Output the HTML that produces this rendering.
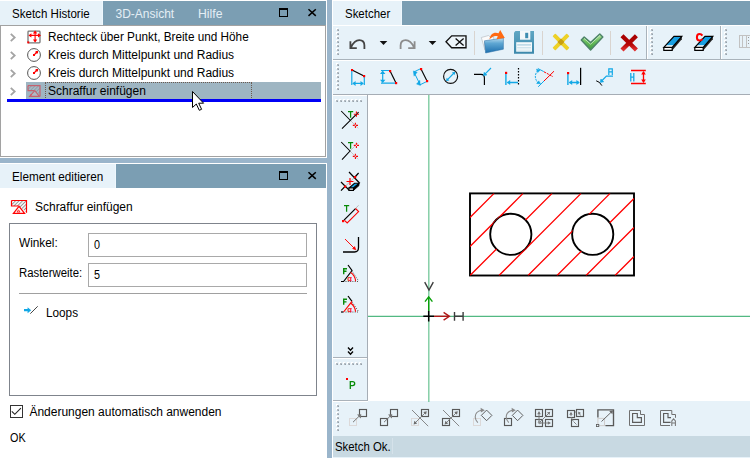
<!DOCTYPE html>
<html><head><meta charset="utf-8"><title>Sketcher</title>
<style>
html,body{margin:0;padding:0}
body{width:750px;height:458px;overflow:hidden;position:relative;background:#e7f2f9;font-family:"Liberation Sans",sans-serif;font-size:12px;color:#000}
.b{position:absolute}
.t{position:absolute;white-space:pre;line-height:14px;height:14px;transform-origin:0 0}
.steel{background:#7b9eb3}
.light{background:#e7f2f9}
.spl{background:#9ab5cb}
svg{position:absolute;left:0;top:0}
</style></head><body>
<!-- top line -->
<div class="b" style="left:0;top:0;width:750px;height:1px;background:#fff"></div>
<!-- LEFT: tab bar 1 -->
<div class="b steel" style="left:0;top:1px;width:326px;height:24px"></div>
<div class="b light" style="left:0;top:1px;width:102px;height:24px;border-right:1px solid #eef7fd"></div>
<div class="t" id="t1" style="left:12px;top:7px;transform:scaleX(0.963);">Sketch Historie</div>
<div class="t" id="t2" style="left:115.5px;top:7px;transform:scaleX(1.0);color:#e4eef5">3D-Ansicht</div>
<div class="t" id="t3" style="left:198.3px;top:7px;transform:scaleX(1.02);color:#e4eef5">Hilfe</div>
<!-- tree -->
<div class="b" style="left:0;top:25px;width:324px;height:130px;background:#fff;border:1px solid #a2a2a2"></div>
<div class="b" style="left:26px;top:82px;width:295px;height:17px;background:#9eb5c2"></div>
<div class="b" style="left:45px;top:82px;width:205px;height:15px;border:1px dotted #6b5a50;border-bottom:none"></div>
<div class="b" style="left:7px;top:99px;width:314px;height:3px;background:#0000f6"></div>
<div class="t" id="t4" style="left:48px;top:30px;transform:scaleX(0.98);">Rechteck über Punkt, Breite und Höhe</div>
<div class="t" id="t5" style="left:48px;top:48px;transform:scaleX(1);">Kreis durch Mittelpunkt und Radius</div>
<div class="t" id="t6" style="left:48px;top:66px;transform:scaleX(1);">Kreis durch Mittelpunkt und Radius</div>
<div class="t" id="t7" style="left:48px;top:84px;transform:scaleX(1);">Schraffur einfügen</div>
<!-- h splitter -->
<div class="b" style="left:0;top:157px;width:327px;height:7px;background:#fff"></div>
<!-- tab bar 2 -->
<div class="b steel" style="left:0;top:164px;width:326px;height:24px"></div>
<div class="b light" style="left:0;top:164px;width:115px;height:24px;border-right:1px solid #eef7fd"></div>
<div class="t" id="t8" style="left:12px;top:170px;transform:scaleX(0.978);">Element editieren</div>
<!-- edit panel -->
<div class="b" style="left:0;top:188px;width:326px;height:270px;background:#fff"></div>
<div class="t" id="t9" style="left:35px;top:200px;transform:scaleX(0.998);">Schraffur einfügen</div>
<div class="b" style="left:9px;top:223px;width:306px;height:171px;border:1px solid #7f848c"></div>
<div class="t" id="t10" style="left:19px;top:236px;transform:scaleX(0.985);">Winkel:</div>
<div class="b" style="left:88px;top:233px;width:217px;height:22px;border:1px solid #a9a9a9;background:#fff"></div>
<div class="t" id="t11" style="left:94px;top:238px;transform:scaleX(0.9);">0</div>
<div class="t" id="t12" style="left:19px;top:266px;transform:scaleX(0.947);">Rasterweite:</div>
<div class="b" style="left:88px;top:263px;width:217px;height:22px;border:1px solid #a9a9a9;background:#fff"></div>
<div class="t" id="t13" style="left:94px;top:268px;transform:scaleX(0.9);">5</div>
<div class="b" style="left:19px;top:293px;width:288px;height:1px;background:#a0a0a0"></div>
<div class="t" id="t14" style="left:46px;top:306px;transform:scaleX(0.98);">Loops</div>
<div class="b" style="left:10px;top:405px;width:11px;height:11px;border:1px solid #333;background:#fff"></div>
<div class="t" id="t15" style="left:29.4px;top:405px;transform:scaleX(1.0);">Änderungen automatisch anwenden</div>
<div class="t" id="t16" style="left:9.5px;top:431px;transform:scaleX(0.9);">OK</div>
<!-- v splitter -->
<div class="b" style="left:326px;top:0;width:7px;height:458px;background:#fff"></div>
<div class="b spl" style="left:327px;top:0;width:5px;height:458px"></div>
<div class="b spl" style="left:0;top:158px;width:331px;height:5px"></div>
<!-- RIGHT -->
<div class="b steel" style="left:402px;top:1px;width:348px;height:24px"></div>
<div class="b" style="left:401px;top:1px;width:1px;height:24px;background:#eef7fd"></div>
<div class="t" id="t17" style="left:345px;top:7px;transform:scaleX(0.955);">Sketcher</div>
<div class="b" style="left:333px;top:25px;width:417px;height:1px;background:#fff"></div>
<div class="b" style="left:333px;top:59px;width:417px;height:1px;background:#a9b3bb"></div>
<div class="b" style="left:333px;top:60px;width:417px;height:1px;background:#fff"></div>
<div class="b" style="left:333px;top:94px;width:417px;height:1px;background:#a6adb5"></div>
<div class="b" style="left:333px;top:95px;width:34px;height:1px;background:#fff"></div>
<!-- canvas -->
<div class="b" style="left:367px;top:95px;width:383px;height:306px;background:#fff;border-left:1px solid #a6adb5"></div>
<div class="b" style="left:333px;top:357px;width:34px;height:1px;background:#aab2ba"></div>
<div class="b" style="left:333px;top:358px;width:34px;height:1px;background:#fff"></div>
<div class="b" style="left:333px;top:400px;width:35px;height:1px;background:#aab2ba"></div>
<div class="b" style="left:333px;top:401px;width:35px;height:1px;background:#fff"></div>
<!-- status -->
<div class="b" style="left:333px;top:436px;width:417px;height:21px;background:#c8d9e2"></div>
<div class="t" id="t18" style="left:335px;top:440px;transform:scaleX(0.948);">Sketch Ok.</div>
<svg id="ov" width="750" height="458" viewBox="0 0 750 458">
<!-- header icons panel 1 & 2 -->
<g id="hdr1" fill="none" stroke="#000">
<rect x="279.5" y="9.5" width="8" height="7" stroke-width="1"/>
<rect x="279" y="8" width="9" height="2" fill="#000" stroke="none"/>
<path d="M308.5 9.3 L315.8 15.9 M315.8 9.3 L308.5 15.9" stroke-width="1.5"/>
</g>
<g id="hdr2" fill="none" stroke="#000" transform="translate(0,163)">
<rect x="279.5" y="9.5" width="8" height="7" stroke-width="1"/>
<rect x="279" y="8" width="9" height="2" fill="#000" stroke="none"/>
<path d="M308.5 9.3 L315.8 15.9 M315.8 9.3 L308.5 15.9" stroke-width="1.5"/>
</g>
<!-- tree chevrons -->
<g fill="none" stroke="#a4a4a4" stroke-width="1.8">
<path d="M10.8 33.8 L14.7 37.5 L10.8 41.2"/>
<path d="M10.8 51.8 L14.7 55.5 L10.8 59.2"/>
<path d="M10.8 69.8 L14.7 73.5 L10.8 77.2"/>
<path d="M10.8 87.8 L14.7 91.5 L10.8 95.2"/>
</g>
<!-- tree icon 1: rectangle w/ arrows -->
<g id="ti1">
<rect x="28" y="31.2" width="12" height="11.6" rx="0.8" fill="#fff" stroke="#777" stroke-width="1.3"/>
<path d="M29.5 35.4 H40 M35.1 31.5 V41.5" stroke="#f00" stroke-width="1.1" fill="none"/>
<path d="M28.4 35.4 L31.4 33.2 V37.6 Z M41 35.4 L38 33.2 V37.6 Z M35.1 30.4 L32.9 33.4 H37.3 Z M35.1 42.4 L32.9 39.5 H37.3 Z" fill="#f00"/>
<rect x="27.3" y="41.4" width="2" height="2" fill="#f00"/>
</g>
<!-- tree icon 2,3: circle -->
<g id="ti2">
<circle cx="34" cy="55" r="6.4" fill="#fff" stroke="#555" stroke-width="1"/>
<path d="M34 55 L37 52" stroke="#f00" stroke-width="1.1"/>
<rect x="33" y="54" width="2" height="2" fill="#f00"/><rect x="35.6" y="51" width="2.4" height="2.4" fill="#f00"/>
</g>
<g id="ti3" transform="translate(0,18)">
<circle cx="34" cy="55" r="6.4" fill="#fff" stroke="#555" stroke-width="1"/>
<path d="M34 55 L37 52" stroke="#f00" stroke-width="1.1"/>
<rect x="33" y="54" width="2" height="2" fill="#f00"/><rect x="35.6" y="51" width="2.4" height="2.4" fill="#f00"/>
</g>
<!-- tree icon 4: hatch (selected, blended) -->
<g id="ti4">
<defs><pattern id="hp2" width="2.5" height="2.5" patternUnits="userSpaceOnUse" patternTransform="rotate(45)"><rect width="2.5" height="2.5" fill="#a9bcc8"/><rect width="1" height="2.5" fill="#8d9ea8"/></pattern></defs>
<path d="M28 85.6 H40 V96 L34.5 90.5 H28 Z" fill="url(#hp2)" stroke="none"/>
<path d="M28 85.6 H40 V96.3 M28 85.6 V90.6 H34.3" fill="none" stroke="#c4626f" stroke-width="1.2"/>
<path d="M34.8 90.6 L29.6 96.4 H39.4 Z" fill="#aebbc6" stroke="#c4626f" stroke-width="1.1"/>
<rect x="30.5" y="94" width="1.4" height="1.4" fill="#e05060"/>
</g>
<!-- hatch icon in edit panel -->
<g id="hi">
<defs><pattern id="hp" width="2.5" height="2.5" patternUnits="userSpaceOnUse" patternTransform="rotate(45)"><rect width="2.5" height="2.5" fill="#fff"/><rect width="1" height="2.5" fill="#909090"/></pattern></defs>
<path d="M11.5 200.5 H26.5 V212.6 L19 206 H11.5 Z" fill="url(#hp)"/>
<path d="M11.5 200.5 H26.5 V212.8 M11.5 200.5 V206 H18.5" fill="none" stroke="#f00" stroke-width="1.2"/>
<path d="M19 206.3 L13.4 213.4 H24.6 Z" fill="#fff" stroke="#f00" stroke-width="1.2"/>
<path d="M18.5 209.8 L17 212 H20 Z" fill="none" stroke="#f00" stroke-width="0.8"/>
</g>
<!-- loops icon -->
<g id="li">
<path d="M24 309.1 H27.6 V307.2 L31.2 310.2 L27.6 313.2 V311.3 H24 Z" fill="#12a8e6"/>
<path d="M30.3 313.7 L37.7 306.3" stroke="#222" stroke-width="0.85"/>
</g>
<!-- checkbox tick -->
<path d="M11.8 411.4 L14.8 414.3 L20.9 408.1" fill="none" stroke="#222" stroke-width="1.15"/>
<!-- cursor -->
<path d="M192.5 91.5 V107.5 L196.3 104 L199.3 110.3 L201.6 109.3 L198.7 103.2 H203.6 Z" fill="#fff" stroke="#000" stroke-width="1" stroke-linejoin="miter"/>

<!-- grippers -->
<defs>
<g id="gv"><rect x="-1" y="-1" width="2" height="2" fill="#fff"/><rect width="2" height="2" fill="#b3bcc4"/><rect x="1" y="1" width="1" height="1" fill="#97a1a9"/></g>
</defs>
<g id="grip-tb1">
<use href="#gv" x="337" y="29"/><use href="#gv" x="337" y="33"/><use href="#gv" x="337" y="37"/><use href="#gv" x="337" y="41"/><use href="#gv" x="337" y="45"/><use href="#gv" x="337" y="49"/><use href="#gv" x="337" y="53"/>
</g>
<g id="grip-tb1b">
<use href="#gv" x="651" y="29"/><use href="#gv" x="651" y="33"/><use href="#gv" x="651" y="37"/><use href="#gv" x="651" y="41"/><use href="#gv" x="651" y="45"/><use href="#gv" x="651" y="49"/><use href="#gv" x="651" y="53"/>
</g>
<g id="grip-tb1c">
<use href="#gv" x="725" y="29"/><use href="#gv" x="725" y="33"/><use href="#gv" x="725" y="37"/><use href="#gv" x="725" y="41"/><use href="#gv" x="725" y="45"/><use href="#gv" x="725" y="49"/><use href="#gv" x="725" y="53"/>
</g>
<g id="grip-tb2">
<use href="#gv" x="337" y="64"/><use href="#gv" x="337" y="68"/><use href="#gv" x="337" y="72"/><use href="#gv" x="337" y="76"/><use href="#gv" x="337" y="80"/><use href="#gv" x="337" y="84"/><use href="#gv" x="337" y="88"/>
</g>
<g id="grip-vt1">
<use href="#gv" x="336" y="100"/><use href="#gv" x="340" y="100"/><use href="#gv" x="344" y="100"/><use href="#gv" x="348" y="100"/><use href="#gv" x="352" y="100"/><use href="#gv" x="356" y="100"/><use href="#gv" x="360" y="100"/>
</g>
<g id="grip-vt2">
<use href="#gv" x="336" y="363"/><use href="#gv" x="340" y="363"/><use href="#gv" x="344" y="363"/><use href="#gv" x="348" y="363"/><use href="#gv" x="352" y="363"/><use href="#gv" x="356" y="363"/><use href="#gv" x="360" y="363"/>
</g>
<g id="grip-bt">
<use href="#gv" x="337" y="405"/><use href="#gv" x="337" y="409"/><use href="#gv" x="337" y="413"/><use href="#gv" x="337" y="417"/><use href="#gv" x="337" y="421"/><use href="#gv" x="337" y="425"/><use href="#gv" x="337" y="429"/>
</g>
<!-- toolbar separators -->
<g stroke="#d9d4cf" stroke-width="1">
<path d="M474.5 31 V55 M542.5 31 V55 M610.5 31 V55"/>
</g>
<g stroke="#a9b3bb" stroke-width="1">
<path d="M646.5 26 V59 M720.5 26 V59"/>
</g>
<path d="M647.5 26 V59 M721.5 26 V59" stroke="#fff" stroke-width="1"/>
<!-- undo -->
<path d="M350.4 41.3 V48.1 H356.8 M350.9 47.6 C353 43 356.3 40.2 359.3 40.2 C362.8 40.2 364.4 42.8 364.4 45.6 V49" fill="none" stroke="#444" stroke-width="1.8"/>
<path d="M379.7 41 H387.3 L383.5 45 Z" fill="#111"/>
<!-- redo -->
<path d="M414.6 41.3 V48.1 H408.2 M414.1 47.6 C412 43 408.7 40.2 405.7 40.2 C402.2 40.2 400.6 42.8 400.6 45.6 V49" fill="none" stroke="#8c8c8c" stroke-width="1.8"/>
<path d="M428.7 41 H436.3 L432.5 45 Z" fill="#111"/>
<!-- backspace -->
<path d="M451.7 35.9 H466 V47.7 H451.7 L446 41.8 Z" fill="#eef6fb" stroke="#111" stroke-width="1.35" stroke-linejoin="miter"/>
<path d="M455.6 38.4 L463.6 45.4 M463.6 38.4 L455.6 45.4" stroke="#111" stroke-width="1.35"/>

<!-- folder open icon -->
<defs>
<linearGradient id="gfold" x1="0" y1="0" x2="0" y2="1"><stop offset="0" stop-color="#b9dcef"/><stop offset="0.35" stop-color="#5fa7d3"/><stop offset="1" stop-color="#1d6fae"/></linearGradient>
<linearGradient id="gflop" x1="0" y1="0" x2="0" y2="1"><stop offset="0" stop-color="#5fa6c3"/><stop offset="1" stop-color="#3b88ab"/></linearGradient>
<linearGradient id="gchk" x1="0" y1="0" x2="0" y2="1"><stop offset="0" stop-color="#b4e3a4"/><stop offset="0.45" stop-color="#6cc060"/><stop offset="1" stop-color="#3c9a3c"/></linearGradient>
<linearGradient id="gredx" x1="0" y1="0" x2="0" y2="1"><stop offset="0" stop-color="#a80000"/><stop offset="0.6" stop-color="#b40606"/><stop offset="1" stop-color="#e03030"/></linearGradient>
</defs>
<g id="folder">
<path d="M481.3 37.5 L488.5 35.5 L490.5 37.3 L493.5 36.7 L494 41 L484.5 42 L485 50 Z" fill="#fbfbfb" stroke="#b9bec4" stroke-width="0.7"/>
<path d="M484.4 40.8 L503.4 38 L503.4 49.2 L485.6 53 Z" fill="url(#gfold)" stroke="#2a6ea5" stroke-width="0.5"/>
<path d="M489.5 39.5 C490 34 494 31.5 498.5 33.2 L500.2 30 L504.8 38 L496.5 39.3 L497.8 36.3 C494.5 35.3 492 36.5 489.5 39.5 Z" fill="#ff6a12"/>
</g>
<g id="floppy">
<path d="M515.5 31 H534 V53.8 H514 V32.5 Z" fill="url(#gflop)"/>
<rect x="520" y="31" width="10.3" height="8.7" fill="#f4f8fa"/>
<rect x="525.2" y="32.8" width="3" height="5.4" fill="#3f8db0"/>
<rect x="516.2" y="42.2" width="15.8" height="9.5" fill="#f4f9fb"/>
<rect x="517.2" y="44.2" width="13.8" height="1.4" fill="#b5d5e3"/><rect x="517.2" y="47" width="13.8" height="1.4" fill="#cfe3ec"/><rect x="517.2" y="49.6" width="13.8" height="1.2" fill="#dcebf1"/>
</g>
<g id="yx">
<path d="M555.3 34.6 L568.4 47.7 L566.7 49.4 L553.6 36.3 Z M566.7 34.6 L553.6 47.7 L555.3 49.4 L568.4 36.3 Z" fill="#f1d51f" stroke="#ecd02a" stroke-width="1.6" stroke-linejoin="round"/>
<rect x="558.5" y="39.5" width="5" height="5" transform="rotate(45 561 42)" fill="#c9a010"/>
</g>
<g id="chk">
<path d="M581.3 40 L584.2 37 L590.6 42.6 L599.8 34 L602.8 37 L590.6 50 Z" fill="url(#gchk)" stroke="#4d8468" stroke-width="1.5" stroke-linejoin="round"/>
<path d="M584.3 38.6 L590.6 44.2 L599.8 35.6" fill="none" stroke="#d4f0c8" stroke-width="0.9" stroke-linecap="round" stroke-linejoin="round" opacity="0.85"/>
</g>
<g id="redx">
<path d="M622 35.8 L636.4 50 M636.4 35.8 L622 50" fill="none" stroke="url(#gredx)" stroke-width="4.3"/>
</g>
<!-- erasers -->
<g id="er1">
<path d="M674 36.3 H681.8 L672.2 47.3 H663.8 Z" fill="#189fe2"/>
<path d="M665.6 45.2 H674 L672.2 47.3 H663.8 Z" fill="#fff"/>
<path d="M663.8 47.3 H672.2 V50.4 H663.8 Z" fill="#fff"/>
<path d="M672.2 47.3 L681.8 36.3 V39.2 L672.2 50.4 Z" fill="#222"/>
<path d="M674 36.3 H681.8 L672.2 47.3 H663.8 Z M663.8 47.3 V50.4 H672.2 V47.3" fill="none" stroke="#000" stroke-width="1.2" stroke-linejoin="miter"/>
</g>
<use href="#er1" x="31" y="0"/>
<path d="M702.4 35.6 C701.6 34.4 700.7 34 699.6 34 C697.8 34 696.9 35.4 696.9 37.3 C696.9 39.3 697.8 40.6 699.6 40.6 C700.8 40.6 701.7 40.1 702.4 39" fill="none" stroke="#f00" stroke-width="2"/>
<!-- partial icon right -->
<g stroke="#c2c2c2" stroke-width="1" fill="none">
<path d="M739.5 35 V48 M742.5 35 V48 M739 35.5 H750 M739 47.5 H750 M746.5 35 V48"/>
<path d="M748.5 37 V46" stroke="#999" stroke-dasharray="1 2"/>
</g>

<!-- toolbar 2 icons -->
<g id="tb2" fill="none" stroke-width="1.3" stroke="#12a8e6">
<!-- i1 -->
<path d="M351.8 71 V85 M364.3 77 V85 M353 83.4 H363" stroke-width="1.2"/>
<path d="M352.3 83.4 L355.6 80.9 V85.9 Z M363.8 83.4 L360.5 80.9 V85.9 Z" fill="#12a8e6" stroke="none"/>
<path d="M352 70 L364 76" stroke="#000" stroke-width="1.15"/>
<rect x="351" y="69" width="2.1" height="2.1" fill="#f00" stroke="none"/><rect x="363" y="75" width="2.2" height="2.2" fill="#f00" stroke="none"/>
<!-- i2 -->
<path d="M381 70.5 H389.5 M381 83.2 H395.5 M382.7 72 V82" stroke-width="1.2"/>
<path d="M382.7 70.6 L380 74 H385.4 Z M382.7 83.1 L380 79.7 H385.4 Z" fill="#12a8e6" stroke="none"/>
<path d="M390.2 71.2 L396 83" stroke="#000" stroke-width="1.15"/>
<rect x="389" y="70" width="2.2" height="2.2" fill="#f00" stroke="none"/><rect x="395" y="82" width="2.2" height="2.2" fill="#f00" stroke="none"/>
<!-- i3 -->
<path d="M420.8 68.6 L413.8 72 M427 81.4 L420 84.8 M414.6 73.4 L419.4 83.2" stroke-width="1"/>
<path d="M413.3 70.9 L417.2 72.3 L414 76.2 Z M420.4 85.5 L416.5 84.1 L419.8 80.2 Z" fill="#12a8e6" stroke="#12a8e6" stroke-width="0.4"/>
<path d="M421 69 L427 81" stroke="#000" stroke-width="1.15"/>
<rect x="420" y="68" width="2.2" height="2.2" fill="#f00" stroke="none"/><rect x="426" y="80" width="2.2" height="2.2" fill="#f00" stroke="none"/>
<!-- i4 -->
<circle cx="450.6" cy="76.4" r="7" stroke="#111" stroke-width="1.15"/>
<path d="M447.3 79.8 L454 73" stroke-width="1.1"/>
<path d="M455.3 71.7 L451.9 72.4 L454.6 75.1 Z M446 81.1 L449.4 80.4 L446.7 77.7 Z" fill="#12a8e6" stroke="none"/>
<!-- i5 fillet -->
<path d="M474 74.4 H481 Q484.4 74.6 484.4 78 V85" stroke="#000" stroke-width="1.15"/>
<path d="M491 68 L485.2 73.9" stroke-width="1.1"/>
<path d="M483.5 75.6 L484.2 72.3 L486.9 75 Z" fill="#12a8e6" stroke="#12a8e6" stroke-width="0.6"/>
<!-- i6 -->
<path d="M505.9 74 V85 M507.5 82.5 H518" stroke-width="1.4"/>
<path d="M506.8 82.5 L510.2 80 V85 Z" fill="#12a8e6" stroke="none"/>
<path d="M518.5 68 V85" stroke="#000" stroke-width="1.2" stroke-dasharray="1.5 1.5"/>
<rect x="505" y="71.8" width="2.2" height="2.2" fill="#f00" stroke="none"/>
<!-- i7 angle -->
<path d="M537.8 68.5 L543.8 71.6" stroke-width="1"/>
<path d="M544 71.8 L553 76.7" stroke="#f00" stroke-width="1" stroke-dasharray="2.2 1"/>
<path d="M554 71.2 L544 81" stroke="#f00" stroke-width="1"/>
<path d="M544 81 L538.2 86.8" stroke-width="1"/>
<path d="M537.8 70.5 Q532.8 76.5 538 83" stroke-width="1" stroke-dasharray="2 1"/>
<path d="M536.5 69.2 L540 70.3 L537.7 72.5 Z M536.7 83.5 L540.5 83.7 L538.7 80.9 Z" fill="#12a8e6" stroke-width="0.6"/>
<!-- i8 -->
<path d="M567.9 74 V85 M569.5 82.5 H579" stroke-width="1.4"/>
<path d="M568.8 82.5 L572.2 80 V85 Z M579.8 82.5 L576.4 80 V85 Z" fill="#12a8e6" stroke="none"/>
<path d="M580.6 67.8 V85" stroke="#000" stroke-width="1.25"/>
<rect x="567" y="72" width="2.2" height="2.2" fill="#f00" stroke="none"/>
<!-- i9 -->
<path d="M613 76.2 H606.4 L601.6 81" stroke-width="1.2"/>
<path d="M600.2 82.4 L600.9 79 L603.7 81.8 Z" fill="#12a8e6" stroke="#12a8e6" stroke-width="0.6"/>
<path d="M608.8 75 V68.8 H612.3 V75 M608.8 71.8 H612.3" stroke-width="1.2"/>
<path d="M596.2 80.8 Q599.6 81.4 601.9 85.6" stroke="#000" stroke-width="1"/>
<!-- i10 -->
<path d="M631 70.5 H645.8 M631 83.5 H645.8 M643.5 72 V82" stroke="#f00" stroke-width="1.3"/>
<path d="M643.5 70.9 L641.2 74.6 H645.8 Z M643.5 83.1 L641.2 79.4 H645.8 Z" fill="#f00" stroke="none"/>
<path d="M630.8 73 V81.4 M633.8 73 V81.4 M630.8 77.2 H633.8" stroke-width="1.3"/>
</g>

<!-- vertical toolbar icons -->
<defs>
<g id="rplus"><path d="M-2.6 0 H-0.6 M0.6 0 H2.6 M0 -2.6 V-0.6 M0 0.6 V2.6" stroke="#f00" stroke-width="1.1" fill="none"/></g>
<g id="gT"><path d="M0 0.6 H5.2 M2.6 0.6 V6.7" stroke="#078a07" stroke-width="1.25" fill="none"/></g>
<g id="gF"><path d="M0.7 0 V6.2 M0.7 0.7 H4 M0.7 3.3 H3.5" stroke="#078a07" stroke-width="1.4" fill="none"/></g>
</defs>
<g id="v1">
<path d="M350 120 L358.2 128.3" stroke="#bbb" stroke-width="0.8"/>
<path d="M341.2 111 L350 120 M342 128.6 L358.6 112.2" stroke="#000" stroke-width="1.05" fill="none"/>
<use href="#gT" x="348" y="111"/>
<use href="#rplus" x="356.4" y="114.2"/><use href="#rplus" x="355.4" y="125.4"/>
</g>
<g id="v2">
<path d="M350 151 L358.2 142.8 M350 151 L358.2 159.3" stroke="#bbb" stroke-width="0.8"/>
<path d="M341.2 142 L350 151 L342 159.6" stroke="#000" stroke-width="1.05" fill="none"/>
<use href="#gT" x="348" y="142"/>
<use href="#rplus" x="356.4" y="145.4"/><use href="#rplus" x="355.4" y="156.4"/>
</g>
<g id="v3">
<path d="M345 186.5 L355 177" stroke="#aaa" stroke-width="0.8"/>
<path d="M349 172 L359.5 183 M358.6 173 L355 177" stroke="#000" stroke-width="1.2" fill="none"/>
<path d="M341 182 L349.5 190.5 M341 190.6 L345 186.5" stroke="#000" stroke-width="1.2" fill="none"/>
<rect x="354" y="176" width="2.2" height="2.2" fill="#f00"/><rect x="344" y="185.5" width="2.2" height="2.2" fill="#f00"/>
<path d="M346.5 181.5 H353.5 M350 178 V185" stroke="#f00" stroke-width="1.2"/>
<path d="M354.5 183.3 H359 L353.5 188 H349 Z" fill="#189fe2" stroke="#000" stroke-width="1.1"/>
<path d="M349 188 H353.5 V190.4 H349 Z" fill="#fff" stroke="#000" stroke-width="1.1"/>
<path d="M353.5 188 L359 183.3 V185.6 L353.5 190.4 Z" fill="#000" stroke="#000" stroke-width="0.8"/>
</g>
<g id="v4">
<use href="#gT" x="344" y="205"/>
<path d="M355.5 208.5 L358.6 205.3" stroke="#aaa" stroke-width="0.8"/>
<path d="M344 220.2 L355.5 208.6" stroke="#000" stroke-width="1.2"/>
<path d="M355.5 208.5 L358.6 211.6 L347.2 223 L344.5 220.3" stroke="#f00" stroke-width="1.1" fill="none"/>
<rect x="342" y="220" width="2.2" height="2.2" fill="#f00"/>
</g>
<g id="v5">
<path d="M358.5 237 V247.5 Q358.5 252 354.5 252 H343" stroke="#000" stroke-width="1.3" fill="none"/>
<path d="M345 239 L355 249" stroke="#f00" stroke-width="0.95"/>
<path d="M355.9 249.9 L352.6 248.6 L354.6 246.6 Z" fill="#f00" stroke="#f00" stroke-width="0.6"/>
</g>
<g id="v6">
<use href="#gF" x="343" y="268"/>
<path d="M348 265 L352 270.5 L343.6 281.5 H341" stroke="#000" stroke-width="1.2" fill="none"/>
<path d="M352.4 271.6 L358.6 281 M345.5 281.5 H359" stroke="#555" stroke-width="1" stroke-dasharray="1 1.3" fill="none"/>
<path d="M350.6 272.4 A12 12 0 0 1 355.6 281.3" stroke="#f00" stroke-width="1.1" fill="none"/>
<text x="347.5" y="281.4" font-size="7.5" font-family="Liberation Sans, sans-serif" fill="#f00" stroke="#f00" stroke-width="0.25">α</text>
</g>
<g id="v7">
<use href="#gF" x="343" y="298.6"/>
<path d="M348 296 L352 301.3" stroke="#000" stroke-width="1.2" fill="none"/>
<path d="M341 312 H343.6" stroke="#000" stroke-width="1.2"/>
<path d="M352 301.3 L343.6 312" stroke="#f00" stroke-width="1.2"/>
<path d="M352.4 302.4 L358.6 311.6 M345.5 312 H359" stroke="#555" stroke-width="1" stroke-dasharray="1 1.3" fill="none"/>
<path d="M350.6 303 A12 12 0 0 1 355.6 311.8" stroke="#f00" stroke-width="1.1" fill="none"/>
<text x="347.5" y="311.9" font-size="7.5" font-family="Liberation Sans, sans-serif" fill="#f00" stroke="#f00" stroke-width="0.25">α</text>
</g>
<!-- chevrons down -->
<path d="M348 347.6 L350.5 350.2 L353 347.6 M348 351.6 L350.5 354.2 L353 351.6" stroke="#000" stroke-width="1.4" fill="none"/>
<!-- P -->
<rect x="346" y="378" width="2" height="2" fill="#f00"/>
<path d="M350.3 389 V381.6 H352.6 Q354.7 381.6 354.7 383.6 Q354.7 385.6 352.6 385.6 H350.3" stroke="#078a07" stroke-width="1.3" fill="none"/>

<!-- canvas drawing -->
<g id="axes">
<path d="M428.85 95 V402" stroke="#52b982" stroke-width="1.05"/>
<path d="M368 316.4 H750" stroke="#52b982" stroke-width="1.15"/>
</g>
<g id="draw">
<defs><clipPath id="hc"><path clip-rule="evenodd" d="M470 193.4 H634 V275.5 H470 Z M531.4 234.3 A20.6 20.6 0 1 0 490.2 234.3 A20.6 20.6 0 1 0 531.4 234.3 Z M613.3 234.3 A20.6 20.6 0 1 0 572.1 234.3 A20.6 20.6 0 1 0 613.3 234.3 Z"/></clipPath></defs>
<rect x="470" y="193.4" width="164" height="82.1" fill="none" stroke="#000" stroke-width="1.9"/>
<circle cx="510.8" cy="234.3" r="20.6" fill="none" stroke="#000" stroke-width="1.9"/>
<circle cx="592.7" cy="234.3" r="20.6" fill="none" stroke="#000" stroke-width="1.9"/>
<path d="M470.0 217.5 L494.1 193.4 M470.0 246.5 L523.1 193.4 M470.0 275.5 L552.1 193.4 M499.0 275.5 L581.1 193.4 M528.0 275.5 L610.1 193.4 M557.0 275.5 L634.0 198.5 M586.0 275.5 L634.0 227.5 M615.0 275.5 L634.0 256.5" stroke="#f00" stroke-width="1.3" clip-path="url(#hc)"/>
</g>
<g id="origin" fill="none">
<path d="M428.7 311 V297" stroke="#0aa00a" stroke-width="1.4"/>
<path d="M425 301.6 L428.7 296.8 L432.4 301.6" stroke="#0aa00a" stroke-width="1.4"/>
<path d="M434 316.3 H449" stroke="#b01818" stroke-width="1.4"/>
<path d="M443.6 312.4 L449.4 316.3 L443.6 320.2" stroke="#b01818" stroke-width="1.4"/>
<path d="M423.3 316.3 H434 M428.7 311 V321.5" stroke="#000" stroke-width="1.5"/>
<path d="M424.7 282.2 L429 290 L433.3 282.2" stroke="#3c3c3c" stroke-width="1.4"/>
<path d="M454.5 312 V320.7 M463.1 312 V320.7 M454.5 316.3 H463.1" stroke="#3c3c3c" stroke-width="1.4"/>
</g>

<!-- bottom toolbar icons -->
<g id="bt" fill="none" stroke="#585858" stroke-width="1.15">
<!-- b1 move -->
<rect x="349.5" y="418.5" width="7" height="7" stroke="#dcd9d9" stroke-width="1"/><rect x="359.5" y="409.5" width="7" height="7"/><path d="M353 422.2 L359.5 415.8" stroke="#777" stroke-width="1"/><path d="M361.3 414.2 L357 414.6 L360.8 418.4 Z" fill="#777" stroke="none"/>
<rect x="380.5" y="418.5" width="7" height="7"/><rect x="390.5" y="409.5" width="7" height="7"/><path d="M384 422.2 L390.5 415.8" stroke="#777" stroke-width="1"/><path d="M392.3 414.2 L388 414.6 L391.8 418.4 Z" fill="#777" stroke="none"/>
<rect x="411.5" y="418.5" width="7" height="7" stroke="#dcd9d9" stroke-width="1"/><rect x="421.5" y="409.5" width="7" height="7"/><path d="M412 410 L428.2 426.2" stroke="#7c7c7c" stroke-width="0.9"/><path d="M425.5 412.5 L415 423" stroke="#777" stroke-width="0.9"/><path d="M426.8 411.2 L423.2 412 L426 414.8 Z M413.6 424.4 L417.2 423.6 L414.4 420.8 Z" fill="#6c6c6c" stroke="none"/>
<rect x="442.5" y="418.5" width="7" height="7"/><rect x="452.5" y="409.5" width="7" height="7"/><path d="M443 410 L459.2 426.2" stroke="#7c7c7c" stroke-width="0.9"/><path d="M456.5 412.5 L446 423" stroke="#777" stroke-width="0.9"/><path d="M457.8 411.2 L454.2 412 L457 414.8 Z M444.6 424.4 L448.2 423.6 L445.4 420.8 Z" fill="#6c6c6c" stroke="none"/>
<rect x="473.5" y="418.5" width="7" height="7" stroke="#dcd9d9" stroke-width="1"/><path d="M486.6 410.1 L491.9 415.4 L486.6 420.7 L481.3 415.4 Z" stroke-width="0.95"/><path d="M477.8 422.6 Q475.3 420 475.2 417 Q475.4 411.4 481.5 410.3" stroke="#8a8a8a" stroke-width="1.1"/><path d="M484.8 410.2 L480.6 407.8 L480.9 412.6 Z" fill="#8a8a8a" stroke="none"/>
<rect x="504.5" y="418.5" width="7" height="7"/><path d="M517.6 410.1 L522.9 415.4 L517.6 420.7 L512.3 415.4 Z" stroke-width="0.95"/><path d="M508.8 422.6 Q506.3 420 506.2 417 Q506.4 411.4 512.5 410.3" stroke="#8a8a8a" stroke-width="1.1"/><path d="M515.8 410.2 L511.6 407.8 L511.9 412.6 Z" fill="#8a8a8a" stroke="none"/>
<!-- b7 array -->
<rect x="535.5" y="409.5" width="7" height="7"/><rect x="545.5" y="409.5" width="7" height="7"/>
<rect x="535.5" y="419.5" width="7" height="7"/><rect x="545.5" y="419.5" width="7" height="7"/>
<path d="M539 423 V412.5 M539 423 H549.5 M539.5 422.5 L549 413" stroke="#777" stroke-width="0.9"/>
<circle cx="539.6" cy="422.4" r="1.3" stroke="#777" stroke-width="0.7"/>
<path d="M539 411 L537.2 414.2 H540.8 Z M551 423 L547.8 421.2 V424.8 Z M550.2 411.8 L546.9 412.5 L549.5 415.1 Z" fill="#777" stroke="none"/>
<!-- b8 -->
<rect x="567.5" y="410.5" width="7" height="7"/><rect x="576.5" y="409.5" width="7" height="7"/>
<rect x="571.5" y="419.5" width="7" height="7"/>
<path d="M571 416 V413 M571 417 L573 421 M580.5 415.5 L578.8 412.6 M573.5 421.5 L576.5 424.5 M575 412 L577 412" stroke="#777" stroke-width="0.9"/>
<path d="M571 411.8 L569.3 414.8 H572.7 Z M578.4 411.4 L578.2 414.6 L581 413 Z" fill="#777" stroke="none"/>
<!-- b9 scale -->
<rect x="597.9" y="418.4" width="6.6" height="7.2" stroke="#d0cece" stroke-width="1.1"/>
<path d="M597.9 417.5 V409.8 H613.5 V425.6 H605.4" stroke-width="1.35"/>
<path d="M601.5 421.5 L612 411.4" stroke="#666" stroke-width="1"/>
<path d="M613 410.4 L609.2 411.1 L612.3 414.2 Z" fill="#666" stroke="none"/>
<rect x="596.6" y="424.4" width="2.2" height="2.2" stroke-width="0.8" fill="#e7f2f9"/>
<!-- b10 offset -->
<path d="M629.5 410.5 H640.5 V414.5 H644.5 V425.5 H629.5 Z" stroke="#707070" stroke-width="1"/>
<path d="M632.6 413.5 H637.3 V417.6 H641.4 V422.4 H632.6 Z" stroke="#5c5c5c" stroke-width="1.15"/>
<!-- b11 offset A -->
<path d="M670 425.5 H660.5 V410.5 H671.8 V414.5 H675.5 V417.8" stroke="#707070" stroke-width="1"/>
<path d="M670.6 422.4 H663.6 V413.5 H668 V417.6 H671" stroke="#5c5c5c" stroke-width="1.15"/>
<path d="M671.8 426 V421 L673.6 418.8 L675.4 421 V426 M671.8 422.9 H675.4" stroke="#777" stroke-width="1.05"/>
</g>
<!-- status separator -->
<path d="M392.5 438 V454" stroke="#d5e2ea" stroke-width="1"/>


</svg>
</body></html>
